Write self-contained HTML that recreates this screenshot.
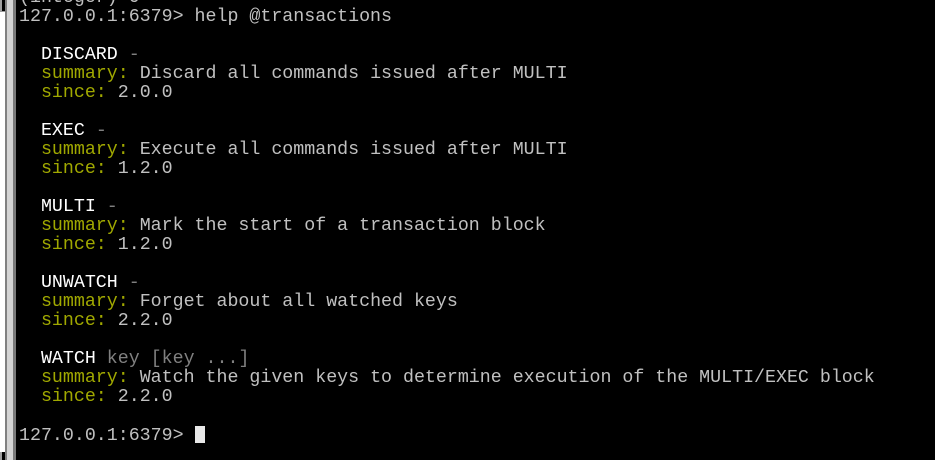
<!DOCTYPE html>
<html><head><meta charset="utf-8"><style>
html,body{margin:0;padding:0;background:#000;}
body{width:935px;height:460px;overflow:hidden;position:relative;}
.l1{position:absolute;left:0;top:0;width:2px;height:460px;background:#a0a0a0}
.wp{position:absolute;left:0;top:11px;width:5px;height:440px;background:#fff;border-top:1px solid #999}
.g1{position:absolute;left:5px;top:0;width:2px;height:460px;background:#808080}
.g2{position:absolute;left:7px;top:0;width:6px;height:460px;background:#d4d4d4}
.g3{position:absolute;left:13px;top:0;width:3px;height:460px;background:#7a7a7a}
.term{position:absolute;left:19px;top:-11px;font-family:"Liberation Mono",monospace;font-size:18.3px;line-height:19px;color:#c0c0c0;white-space:pre;}
.w{color:#fff}.y{color:#a0a800}.d{color:#808080}
.cur{display:inline-block;width:10px;height:17px;background:#e8e8e8;vertical-align:-3px}
</style></head><body>
<div class="l1"></div><div class="wp"></div><div class="g1"></div><div class="g2"></div><div class="g3"></div>
<div class="term">(integer) 0
127.0.0.1:6379&gt; help @transactions

  <span class="w">DISCARD</span> <span class="d">-</span>
  <span class="y">summary:</span> Discard all commands issued after MULTI
  <span class="y">since:</span> 2.0.0

  <span class="w">EXEC</span> <span class="d">-</span>
  <span class="y">summary:</span> Execute all commands issued after MULTI
  <span class="y">since:</span> 1.2.0

  <span class="w">MULTI</span> <span class="d">-</span>
  <span class="y">summary:</span> Mark the start of a transaction block
  <span class="y">since:</span> 1.2.0

  <span class="w">UNWATCH</span> <span class="d">-</span>
  <span class="y">summary:</span> Forget about all watched keys
  <span class="y">since:</span> 2.2.0

  <span class="w">WATCH</span> <span class="d">key [key ...]</span>
  <span class="y">summary:</span> Watch the given keys to determine execution of the MULTI/EXEC block
  <span class="y">since:</span> 2.2.0

127.0.0.1:6379&gt; <span class="cur"></span></div>
</body></html>
